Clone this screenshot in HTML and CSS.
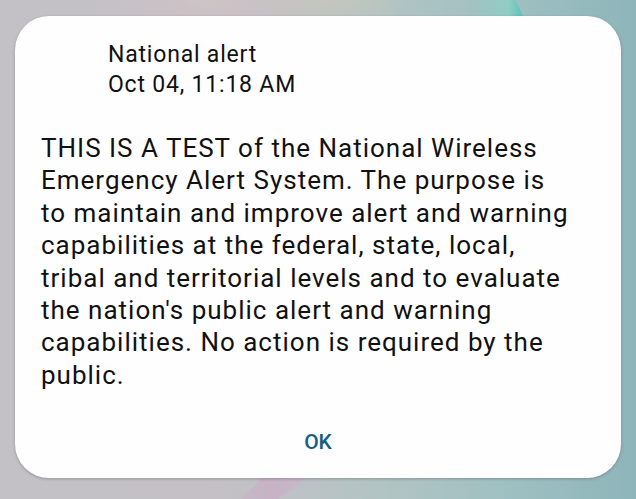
FILE: index.html
```html
<!DOCTYPE html>
<html lang="en">
<head>
<meta charset="utf-8">
<title>National alert</title>
<link rel="stylesheet" href="styles.css">
</head>
<body>
<div class="wallpaper">
  <div class="streak-top"></div>
  <div class="streak-bottom"></div>
  <div class="dialog">
    <div class="header">
      <div class="title">National alert</div>
      <div class="time">Oct 04, 11:18 AM</div>
    </div>
    <p class="message">THIS IS A TEST of the National Wireless<br>Emergency Alert System. The purpose is<br>to maintain and improve alert and warning<br>capabilities at the federal, state, local,<br>tribal and territorial levels and to evaluate<br>the nation's public alert and warning<br>capabilities. No action is required by the<br>public.</p>
    <div class="actions">
      <button class="ok">OK</button>
    </div>
  </div>
</div>
</body>
</html>
```
FILE: styles.css
```css
html, body {
  margin: 0;
  padding: 0;
}
body {
  width: 636px;
  height: 499px;
  overflow: hidden;
  font-family: Roboto, "Noto Sans", "Liberation Sans", sans-serif;
}
.wallpaper {
  position: relative;
  width: 636px;
  height: 499px;
  padding: 16px 15px 21px 15px;
  box-sizing: border-box;
  background:
    radial-gradient(ellipse 120px 40px at 210px 0px, rgba(214,196,196,0.6), rgba(214,196,196,0) 100%),
    radial-gradient(ellipse 80px 30px at 330px 0px, rgba(206,200,184,0.6), rgba(206,200,184,0) 100%),
    linear-gradient(90deg, #c3c1c6 0%, #c4c0c6 35%, #b2c4c4 60%, #9fc0c2 80%, #8db5ba 100%);
}
.streak-top {
  position: absolute;
  left: 470px;
  top: 0;
  width: 54px;
  height: 18px;
  background: linear-gradient(90deg, rgba(160,205,198,0), #92cdc4 70%, #56c4b8 100%);
  clip-path: polygon(0 0, 84% 0, 100% 100%, 0 100%);
}
.streak-bottom {
  position: absolute;
  left: 210px;
  top: 476px;
  width: 100px;
  height: 23px;
  background: linear-gradient(90deg, rgba(200,180,200,0), #c8b2c6 60%, #c6b9c8 100%);
  clip-path: polygon(30% 100%, 55% 0, 100% 0, 68% 100%);
}
.dialog {
  position: relative;
  height: 462px;
  background: #fefefe;
  border-radius: 34px;
  box-shadow: 0 1px 3px rgba(60,60,70,0.35);
  display: flex;
  flex-direction: column;
  box-sizing: border-box;
  padding: 24px 20px 0 26px;
}
.header {
  padding-left: 67px;
  color: #111;
  font-size: 23px;
  letter-spacing: 0.8px;
  line-height: 30px;
}
.message {
  margin: 32px 0 0 0;
  color: #111;
  font-size: 26px;
  letter-spacing: 1px;
  line-height: 32.4px;
  white-space: nowrap;
}
.actions {
  margin-top: auto;
  display: flex;
  justify-content: center;
  padding-bottom: 24px;
  padding-right: 6px;
}
.ok {
  border: none;
  background: none;
  font-family: inherit;
  font-size: 21px;
  font-weight: 500;
  color: #16607e;
  padding: 0;
}
```
